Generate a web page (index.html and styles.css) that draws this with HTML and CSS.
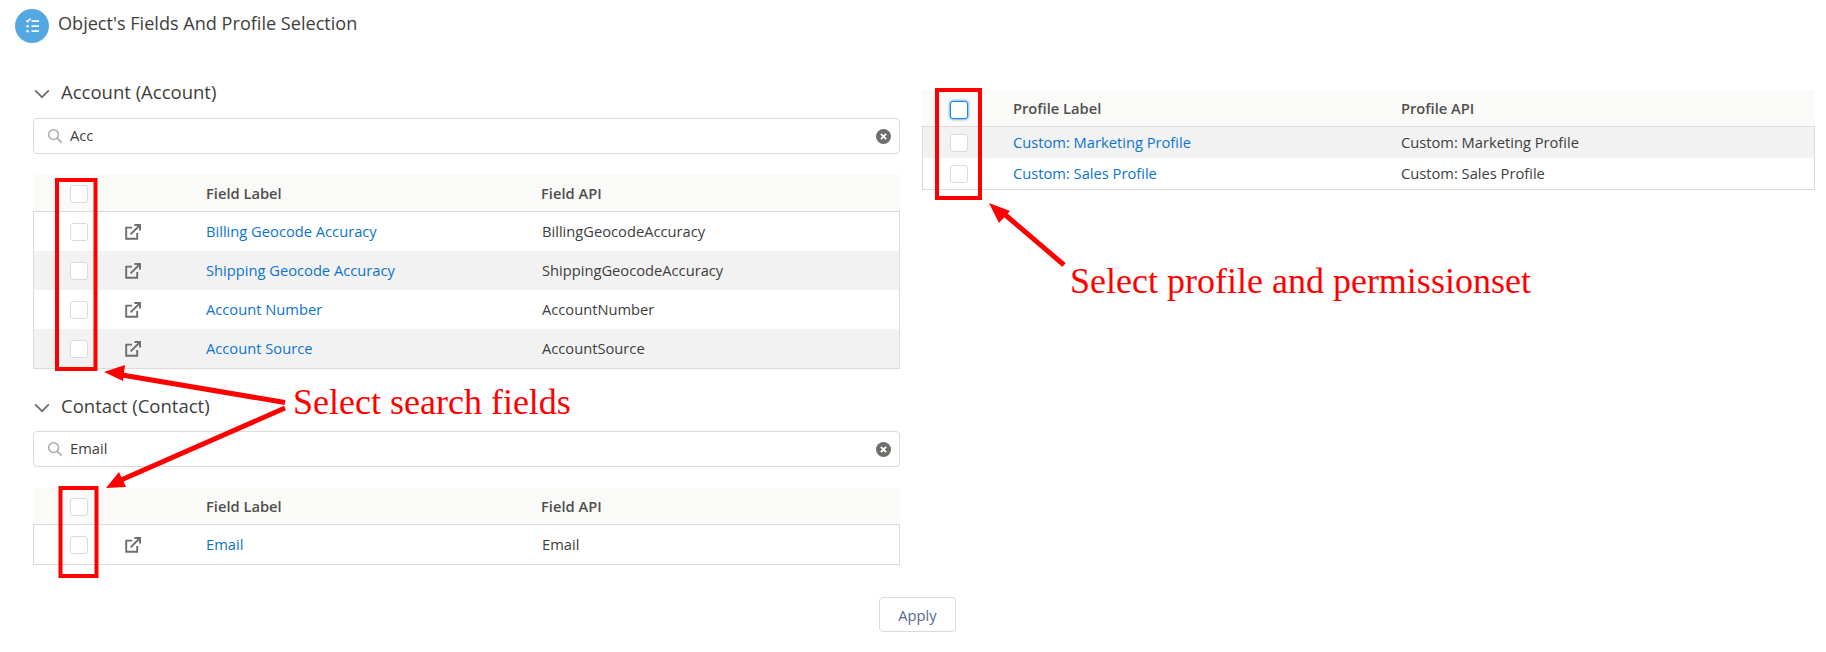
FILE: index.html
```html
<!DOCTYPE html>
<html lang="en">
<head>
<meta charset="utf-8">
<title>Object's Fields And Profile Selection</title>
<link rel="stylesheet" href="styles.css">
</head>
<body>
<div class="page">
  <header class="title-bar">
    <span class="title-icon">
      <svg width="34" height="34" viewBox="0 0 34 34"><path d="M11.2 11.4l1.4 1.4 3-3.2" fill="none" stroke="#fff" stroke-width="1.4"/><path d="M16.5 12.2h7.5M16.5 17.2h7.5M16.5 22.2h7.5" stroke="#fff" stroke-width="1.8"/><circle cx="12.6" cy="17.2" r="1.2" fill="#fff"/><circle cx="12.6" cy="22.2" r="1.2" fill="#fff"/></svg>
    </span>
    <h1 class="title">Object's Fields And Profile Selection</h1>
  </header>

  <main class="columns">
    <div class="left-col">
      <section class="object first">
        <h2 class="object-head">
          <svg class="chevron" width="16" height="10" viewBox="0 0 16 10"><path d="M1.2 1.4L8 8.2l6.8-6.8" fill="none" stroke="#706e6b" stroke-width="1.7"/></svg>
          Account (Account)
        </h2>
        <div class="search">
          <svg class="search-icon" width="16" height="16" viewBox="0 0 16 16"><circle cx="6.6" cy="6.6" r="4.9" fill="none" stroke="#b0ada9" stroke-width="1.5"/><path d="M10.2 10.2l4.4 4.4" stroke="#b0ada9" stroke-width="1.7"/></svg>
          <span class="search-text">Acc</span>
          <svg class="clear-icon" width="15" height="15" viewBox="0 0 15 15"><circle cx="7.5" cy="7.5" r="7.5" fill="#706e6b"/><path d="M4.9 4.9l5.2 5.2M10.1 4.9l-5.2 5.2" stroke="#fff" stroke-width="1.9"/></svg>
        </div>
        <div class="table fields">
          <div class="row head"><span class="cell-cb"><span class="cb"></span></span><span></span><span>Field Label</span><span>Field API</span></div>
          <div class="row body"><span class="cell-cb"><span class="cb"></span></span><span><svg class="ext" width="16" height="16" viewBox="0 0 16 16"><path d="M7 3.6H1.2v11.2h11V9" fill="none" stroke="#706e6b" stroke-width="1.9"/><path d="M5.6 10.4L14 2M9.4 1h5.6v5.6" fill="none" stroke="#706e6b" stroke-width="1.9"/></svg></span><a>Billing Geocode Accuracy</a><span class="val">BillingGeocodeAccuracy</span></div>
          <div class="row body alt"><span class="cell-cb"><span class="cb"></span></span><span><svg class="ext" width="16" height="16" viewBox="0 0 16 16"><path d="M7 3.6H1.2v11.2h11V9" fill="none" stroke="#706e6b" stroke-width="1.9"/><path d="M5.6 10.4L14 2M9.4 1h5.6v5.6" fill="none" stroke="#706e6b" stroke-width="1.9"/></svg></span><a>Shipping Geocode Accuracy</a><span class="val">ShippingGeocodeAccuracy</span></div>
          <div class="row body"><span class="cell-cb"><span class="cb"></span></span><span><svg class="ext" width="16" height="16" viewBox="0 0 16 16"><path d="M7 3.6H1.2v11.2h11V9" fill="none" stroke="#706e6b" stroke-width="1.9"/><path d="M5.6 10.4L14 2M9.4 1h5.6v5.6" fill="none" stroke="#706e6b" stroke-width="1.9"/></svg></span><a>Account Number</a><span class="val">AccountNumber</span></div>
          <div class="row body alt"><span class="cell-cb"><span class="cb"></span></span><span><svg class="ext" width="16" height="16" viewBox="0 0 16 16"><path d="M7 3.6H1.2v11.2h11V9" fill="none" stroke="#706e6b" stroke-width="1.9"/><path d="M5.6 10.4L14 2M9.4 1h5.6v5.6" fill="none" stroke="#706e6b" stroke-width="1.9"/></svg></span><a>Account Source</a><span class="val">AccountSource</span></div>
        </div>
      </section>

      <section class="object second">
        <h2 class="object-head">
          <svg class="chevron" width="16" height="10" viewBox="0 0 16 10"><path d="M1.2 1.4L8 8.2l6.8-6.8" fill="none" stroke="#706e6b" stroke-width="1.7"/></svg>
          Contact (Contact)
        </h2>
        <div class="search">
          <svg class="search-icon" width="16" height="16" viewBox="0 0 16 16"><circle cx="6.6" cy="6.6" r="4.9" fill="none" stroke="#b0ada9" stroke-width="1.5"/><path d="M10.2 10.2l4.4 4.4" stroke="#b0ada9" stroke-width="1.7"/></svg>
          <span class="search-text">Email</span>
          <svg class="clear-icon" width="15" height="15" viewBox="0 0 15 15"><circle cx="7.5" cy="7.5" r="7.5" fill="#706e6b"/><path d="M4.9 4.9l5.2 5.2M10.1 4.9l-5.2 5.2" stroke="#fff" stroke-width="1.9"/></svg>
        </div>
        <div class="table fields">
          <div class="row head"><span class="cell-cb"><span class="cb"></span></span><span></span><span>Field Label</span><span>Field API</span></div>
          <div class="row body"><span class="cell-cb"><span class="cb"></span></span><span><svg class="ext" width="16" height="16" viewBox="0 0 16 16"><path d="M7 3.6H1.2v11.2h11V9" fill="none" stroke="#706e6b" stroke-width="1.9"/><path d="M5.6 10.4L14 2M9.4 1h5.6v5.6" fill="none" stroke="#706e6b" stroke-width="1.9"/></svg></span><a>Email</a><span class="val">Email</span></div>
        </div>
      </section>
    </div>

    <div class="right-col">
      <div class="table profiles">
        <div class="row head"><span class="cell-cb"><span class="cb focus"></span></span><span>Profile Label</span><span>Profile API</span></div>
        <div class="row body alt"><span class="cell-cb"><span class="cb"></span></span><a>Custom: Marketing Profile</a><span class="val">Custom: Marketing Profile</span></div>
        <div class="row body"><span class="cell-cb"><span class="cb"></span></span><a>Custom: Sales Profile</a><span class="val">Custom: Sales Profile</span></div>
      </div>
    </div>
  </main>

  <footer class="actions"><button class="apply">Apply</button></footer>

  <svg class="marks" width="1826" height="652" viewBox="0 0 1826 652">
    <g fill="none" stroke="#f00" stroke-width="4">
      <rect x="57" y="180" width="38.500" height="189"/>
      <rect x="60.500" y="488" width="36" height="88"/>
      <rect x="937" y="90" width="43" height="108"/>
      <path d="M285 402.500L122 375M285 408L121 480M1064 265L1002 212" stroke-width="5"/>
    </g>
    <g fill="#f00">
      <path d="M104 372l21-7-2 16z"/>
      <path d="M106 488l13-16 7 15z"/>
      <path d="M989 203l21 8-11 12z"/>
    </g>
  </svg>
  <p class="note note-search">Select search fields</p>
  <p class="note note-profile">Select profile and permissionset</p>
</div>
</body>
</html>
```

FILE: styles.css
```css
* { box-sizing: border-box; }
html, body { margin: 0; padding: 0; background: #fff; }
body { font-family: "Open Sans", "Liberation Sans", sans-serif; font-size: 14.700px; color: #3e3e3c; overflow: hidden; }
.page { position: relative; width: 1826px; height: 652px; overflow: hidden; }

.title-bar { display: flex; align-items: center; gap: 9px; padding: 9px 0 0 15px; height: 43px; }
.title-icon { width: 34px; height: 34px; border-radius: 50%; background: #54a8e2; display: block; flex: none; }
.title-icon svg { display: block; }
.title { margin: 0 0 7px; font-size: 18.100px; font-weight: 400; color: #3e3e3c; }

.columns { display: flex; gap: 22px; padding-left: 33px; }
.left-col { width: 867px; flex: none; }
.right-col { width: 893px; flex: none; padding-top: 47px; }

.object.first { padding-top: 37px; }
.object.second { padding-top: 25px; }
.object-head { display: flex; align-items: center; gap: 11px; height: 24px; margin: 0 0 14px; padding: 0 0 2px 1px; font-size: 18.500px; font-weight: 400; color: #3e3e3c; }
.object.second .object-head { margin-bottom: 13px; }
.chevron { flex: none; margin-top: 5px; }

.search { display: flex; align-items: center; height: 36px; border: 1px solid #dddbda; border-radius: 4px; padding: 0 8px 0 13px; }
.search-icon { flex: none; }
.search-text { flex: 1; margin-left: 7px; padding-bottom: 2px; }
.clear-icon { flex: none; }

.table { margin-top: 21px; }
.profiles { margin-top: 0; }
.row { display: grid; align-items: center; }
.fields .row { grid-template-columns: 92px 81px 335px 1fr; }
.profiles .row { grid-template-columns: 91px 388px 1fr; }
.head { height: 37px; background: #fafaf9; border-bottom: 1px solid #dddbda; font-weight: 600; color: #514f4d; }
.head .cb { margin-top: 2px; }
.head .cb.focus { margin-top: 3px; }
.fields .body { height: 39px; }
.profiles .body { height: 31px; }
.body { box-shadow: inset 1px 0 #dddbda, inset -1px 0 #dddbda; }
.body:last-child { border-bottom: 1px solid #dddbda; }
.fields .body:last-child { height: 40px; }
.profiles .body:last-child { height: 32px; }
.alt { background: #f2f2f2; }
.body > a, .body > .val { padding-bottom: 2px; }
.fields .val { padding-left: 1px; }
.cell-cb { display: block; }
.fields .cell-cb { padding-left: 37px; }
.profiles .cell-cb { padding-left: 28px; }
.cb { display: block; width: 18px; height: 18px; background: #fff; border: 1px solid #dddbda; border-radius: 3px; }
.cb.focus { border-color: #1589ee; box-shadow: 0 0 3px #0070d2; }
.ext { display: block; }
a { color: #0b74d1; text-decoration: none; }

.actions { display: flex; justify-content: center; padding: 32px 0 0 9px; }
.apply { width: 77px; height: 35px; background: #fff; border: 1px solid #dddbda; border-radius: 4px; font: inherit; color: #54698d; }

.marks { position: absolute; left: 0; top: 0; pointer-events: none; }
.note { position: absolute; margin: 0; font-family: "Liberation Serif", serif; color: #f00; font-size: 36px; line-height: 40px; white-space: nowrap; }
.note-search { left: 293px; top: 382px; }
.note-profile { left: 1070px; top: 261px; }
```
